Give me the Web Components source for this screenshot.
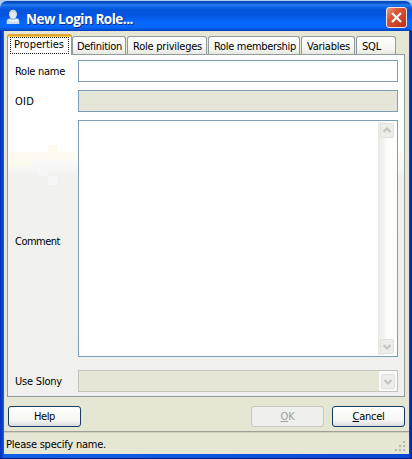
<!DOCTYPE html>
<html lang="en"><head><meta charset="utf-8"><title>New Login Role</title>
<style>
html,body{margin:0;width:412px;height:459px;overflow:hidden;background:#a9cdf5}
body{font:11px/13px "DejaVu Sans Condensed","DejaVu Sans",sans-serif;font-stretch:condensed;color:#000}
</style></head><body>
<login-dialog></login-dialog>
<script>
const define=(name,html,init)=>customElements.define(name,class extends HTMLElement{
  connectedCallback(){
    if(this.shadowRoot)return;
    this.attachShadow({mode:'open'}).innerHTML='<style>*{box-sizing:border-box}</style>'+html;
    if(init)init(this,this.shadowRoot);
  }
});

// Label whose tracking is adjusted to reach the width given in its w attribute.
define('ui-text',`<style>:host{display:inline-block;white-space:pre;flex:none}span{display:inline-block}</style><span><slot></slot></span>`,(el,root)=>{
  const s=root.querySelector('span'),w=+el.getAttribute('w'),n=el.textContent.length;
  s.style.letterSpacing=((w-s.getBoundingClientRect().width)/n)+'px';
  el.style.width=w+'px';
});

define('title-bar',`<style>
:host{display:flex;box-sizing:border-box;height:30px;padding:3px 5px 0 6px;align-items:center;border-radius:7px 7px 0 0;
background:linear-gradient(#0846b4 0,#0650c8 2px,#287ff0 4px,#0b62e4 6px,#0454da 9px,#0555e0 14px,#0566fa 21px,#0668ff 26px,#0458e4 28px,#0340b4 30px)}
ui-text{font:bold 13.5px/18px "Open Sans","Noto Sans",sans-serif;color:#fff;text-shadow:1px 1px 0 #0a2f87;margin:3px auto 0 4px}
svg{flex:none;margin-top:-1px}.x{margin-top:0}
</style>
<svg width="16" height="16" viewBox="0 0 16 16"><path d="M.7 15V12.5Q.7 10 4 9.6L12 9.6Q13.3 10.4 13.3 13V15Z" fill="#c9dced"/><path d="M2 12Q5 9 11 10L12 13Z" fill="#edf4f9"/><ellipse cx="7" cy="5.2" rx="3.9" ry="4.5" fill="#e3e8ec"/><path d="M3.4 3.4Q5 .5 8 1Q10 1.4 10.7 4Q7 2.4 3.4 3.4" fill="#c9d3dc"/><path d="M4.5 9Q7 11 9.5 9L9 11H5Z" fill="#b2c5d7"/></svg>
<ui-text w="107">New Login Role...</ui-text>
<svg class="x" width="21" height="21" viewBox="0 0 21 21"><defs><linearGradient id="r" x2="1" y2="1"><stop stop-color="#f0a08a"/><stop offset=".35" stop-color="#dc5638"/><stop offset="1" stop-color="#b82e12"/></linearGradient></defs><rect x=".5" y=".5" width="20" height="20" rx="2.5" fill="url(#r)" stroke="#f6e4e4"/><path d="M6 6L15 15M15 6L6 15" stroke="#fff" stroke-width="2.2"/></svg>`);

define('tab-item',`<style>
:host{display:flex;box-sizing:border-box;height:18px;padding:3px 0 0 5px;border:1px solid #919b9c;border-bottom:0;border-radius:3px 3px 0 0;background:linear-gradient(#fff,#f6f6f3 65%,#e8e8e2);flex:none}
:host([active]){height:21px;padding:0 1px 0 2px;border-top:2px solid #e5a52b;background:#fff;box-shadow:inset 0 1px #ffcd58;margin-bottom:-1px;z-index:1}
.f{display:contents}
:host([active]) .f{display:block;height:17px;margin-top:1px;padding:0 0 0 3px;width:59px;border:1px dotted #222}
</style><div class="f"><slot></slot></div>`);

define('scroll-button',`<style>:host{display:block;flex:none;width:16px;height:17px}svg{display:block}:host([up]) path{transform:rotate(180deg);transform-origin:8px 8.5px}</style>
<svg width="16" height="17"><rect x="1.5" y="1.5" width="13" height="14" rx="1.5" fill="#ededea" stroke="#e0e0dd"/><path d="M4.5 7L8 10.5L11.5 7" fill="none" stroke="#c4c4c0" stroke-width="2.2"/></svg>`);

define('ui-field',`<style>
:host{display:block;box-sizing:border-box;width:320px;height:22px;border:1px solid #7d9eb7;background:#fff}
:host([readonly]){background:#e5e6d7}
:host([combo]){display:flex;justify-content:flex-end;padding:2px 1px;border-color:#c2c3b9;background:linear-gradient(90deg,#e5e6d5 300px,#fafaf8 300px)}
:host([area]){height:237px;display:flex;justify-content:flex-end;padding:1px 2px 1px 0}
.bar{display:none}
:host([area]) .bar{display:flex;flex-direction:column;justify-content:space-between;width:17px;padding-left:1px;background:linear-gradient(90deg,#e9e9e6,#f4f4f2 6px,#fdfdfc 9px);}
scroll-button{display:none}:host([area]) scroll-button,:host([combo])>scroll-button{display:block}
:host([area]) .c{display:none}:host([combo]) .c{display:block}
</style><div class="bar"><scroll-button up></scroll-button><scroll-button></scroll-button></div><scroll-button class="c"></scroll-button>`);

define('form-row',`<style>:host{display:flex;align-items:center;justify-content:space-between;padding-left:7px}</style><slot></slot>`);

define('push-button',`<style>
:host{display:flex;box-sizing:border-box;width:73px;height:21px;align-items:center;justify-content:center;border:1px solid #173b62;border-radius:3px;background:linear-gradient(#fff,#f5f5f1 70%,#dcdce2);flex:none}
:host([disabled]){border-color:#c8c8c0;background:#efefeb;color:#a0a09a}
</style><slot></slot>`);

define('login-dialog',`<style>
:host{display:flex;flex-direction:column;box-sizing:border-box;width:412px;height:459px;padding-top:1px}
.frame{flex:1;display:flex;flex-direction:column;padding:0 3px 4px 4px;border-bottom:1px solid #001b82;background:linear-gradient(90deg,#0730bb 0,#0840cc 2px,#1260e8 4px,#0c48d0 409px,#0735ba 410px,#0420a0 412px)}
.client{flex:1;display:flex;flex-direction:column;background:#e6e6d5;min-height:0}
.book{padding:4px 3px 0;height:365px;display:flex;flex-direction:column;flex:none}
.tabs{display:flex;align-items:flex-end;gap:1px;height:19px;flex:none}
.page{height:343px;flex:none;width:398px;border:1px solid #919b9c;padding:5px 6px 0 0;display:grid;grid-template-rows:22px 22px 237px 22px;row-gap:8px;align-content:start;
background:
linear-gradient(#fffaf0,#fffaf0) 40px 90px/9px 9px no-repeat,
linear-gradient(#f7f7f7,#f7f7f7) 31px 112px/9px 9px no-repeat,
linear-gradient(#f7f7f7,#f7f7f7) 40px 121px/9px 9px no-repeat,
linear-gradient(#fffaf0,#fffaf0) 0 97px/23px 15px no-repeat,
linear-gradient(#fff 0,#fff 97px,#fffaf2 97px,#fffaf2 105px,#f9f9f9 105px,#f6f6f6 116px,#f1f1f0 120px,#f0f0ef 100%)}
.page form-row:nth-child(3) ui-text{margin-top:5px}
.page form-row:nth-child(4){margin-top:5px;margin-bottom:-5px}
.actions{display:flex;flex:none;gap:8px;padding:10px 4px 0 4px;height:35px}.actions push-button:first-child{margin-right:auto}
.status{flex:1;border-top:1px solid #a0a196;padding:6px 1px 0 2px;display:flex;justify-content:space-between;align-items:flex-start;box-shadow:inset 0 1px #d2d2c3}
.grip{align-self:flex-end;flex:none;margin:0 1px 1px 0}u{text-decoration-thickness:1px;text-underline-offset:1px}
</style>
<title-bar></title-bar>
<div class="frame"><div class="client">
<div class="book"><div class="tabs">
<tab-item active style="width:65px"><ui-text w="50">Properties</ui-text></tab-item>
<tab-item style="width:54px;margin-left:-1px;padding-left:4px"><ui-text w="45">Definition</ui-text></tab-item>
<tab-item style="width:80px"><ui-text w="69">Role privileges</ui-text></tab-item>
<tab-item style="width:92px"><ui-text w="82">Role membership</ui-text></tab-item>
<tab-item style="width:54px"><ui-text w="43">Variables</ui-text></tab-item>
<tab-item style="width:40px"><ui-text w="19">SQL</ui-text></tab-item>
</div><div class="page">
<form-row><ui-text w="50">Role name</ui-text><ui-field></ui-field></form-row>
<form-row><ui-text w="19">OID</ui-text><ui-field readonly></ui-field></form-row>
<form-row><ui-text w="45">Comment</ui-text><ui-field area></ui-field></form-row>
<form-row><ui-text w="47">Use Slony</ui-text><ui-field combo></ui-field></form-row>
</div></div>
<div class="actions"><push-button><ui-text w="21">Help</ui-text></push-button><push-button disabled><ui-text w="14"><u>O</u>K</ui-text></push-button><push-button><ui-text w="32"><u>C</u>ancel</ui-text></push-button></div>
<div class="status"><ui-text w="100">Please specify name.</ui-text>
<svg class="grip" width="12" height="12" fill="#b8b7a8"><path d="M8 0h2v2h-2zM4 4h2v2h-2zM8 4h2v2h-2zM0 8h2v2h-2zM4 8h2v2h-2zM8 8h2v2h-2z"/></svg></div>
</div></div>`);
</script></body></html>
